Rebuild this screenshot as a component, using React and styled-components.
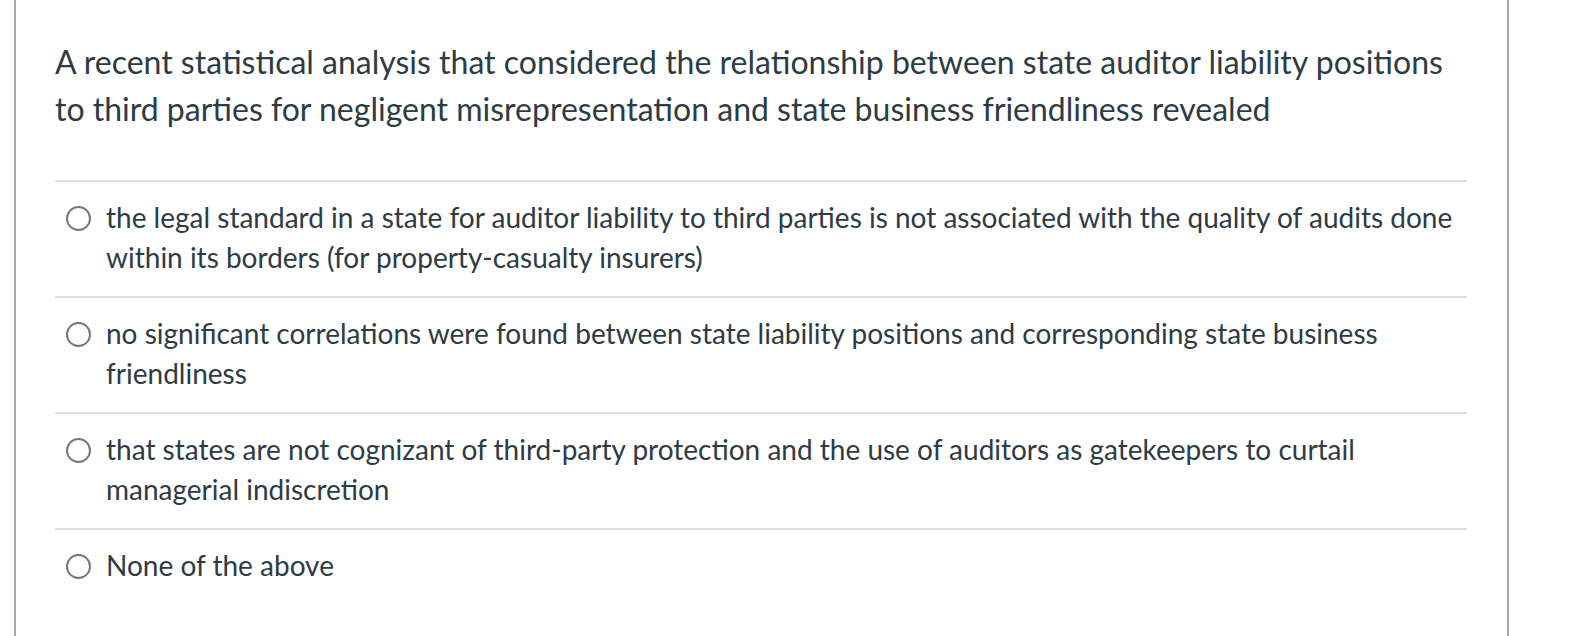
import React from "react";
import styled, { createGlobalStyle } from "styled-components";

const GlobalStyle = createGlobalStyle`
  html, body {
    margin: 0;
    padding: 0;
    background: #fff;
  }
  body {
    font-family: Lato, "Open Sans", sans-serif;
    color: #2d3b45;
  }
`;

const answers = [
  "the legal standard in a state for auditor liability to third parties is not associated with the quality of audits done within its borders (for property-casualty insurers)",
  "no significant correlations were found between state liability positions and corresponding state business friendliness",
  "that states are not cognizant of third-party protection and the use of auditors as gatekeepers to curtail managerial indiscretion",
  "None of the above",
];

const App = () => {
  return (
    <>
      <GlobalStyle />
      <StyledQuestion>
        <QuestionText>
          A recent statistical analysis that considered the relationship
          between state auditor liability positions to third parties for
          negligent misrepresentation and state business friendliness revealed
        </QuestionText>
        <AnswerList>
          {answers.map((text, i) => (
            <Answer key={i}>
              <Radio type="radio" name="answer" />
              <AnswerLabel>{text}</AnswerLabel>
            </Answer>
          ))}
        </AnswerList>
      </StyledQuestion>
    </>
  );
};

const StyledQuestion = styled.div`
  box-sizing: border-box;
  margin-left: 14px;
  width: 1495px;
  min-height: 100vh;
  border-left: 2px solid #a9a9a9;
  border-right: 2px solid #a9a9a9;
  padding: 38px 40px 0 39px;
`;

const QuestionText = styled.p`
  margin: 0 0 48px;
  font-size: 32px;
  line-height: 47px;
  color: #2d3b45;
`;

const AnswerList = styled.div`
  display: flex;
  flex-direction: column;
`;

const Answer = styled.label`
  display: flex;
  align-items: flex-start;
  gap: 15px;
  border-top: 2px solid #dddddd;
  padding: 15px 0 19px 11px;
`;

const Radio = styled.input`
  appearance: none;
  flex: none;
  width: 25px;
  height: 25px;
  margin: 9px 0 0;
  border: 2px solid #777;
  border-radius: 50%;
  background: #fff;
`;

const AnswerLabel = styled.span`
  font-size: 28px;
  line-height: 40px;
  color: #2d3b45;
`;

export default App;
